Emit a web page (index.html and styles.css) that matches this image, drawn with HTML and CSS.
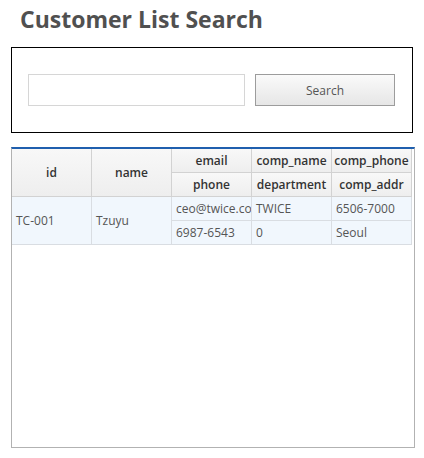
FILE: index.html
```html
<!DOCTYPE html>
<html lang="en">
<head>
<meta charset="utf-8">
<title>Customer List Search</title>
<link rel="stylesheet" href="styles.css">
</head>
<body>
<h1 class="title">Customer List Search</h1>
<div class="search-box">
  <input class="search-input" type="text">
  <button class="search-btn" type="button">Search</button>
</div>
<div class="grid-wrap">
  <div class="grid">
    <div class="hd span2">id</div>
    <div class="hd span2">name</div>
    <div class="hd">email</div>
    <div class="hd">comp_name</div>
    <div class="hd">comp_phone</div>
    <div class="hd">phone</div>
    <div class="hd">department</div>
    <div class="hd">comp_addr</div>
    <div class="td span2">TC-001</div>
    <div class="td span2">Tzuyu</div>
    <div class="td"><span class="clip">ceo@twice.com</span></div>
    <div class="td">TWICE</div>
    <div class="td">6506-7000</div>
    <div class="td">6987-6543</div>
    <div class="td">0</div>
    <div class="td">Seoul</div>
  </div>
</div>
</body>
</html>
```
FILE: styles.css
```css
html, body {
  margin: 0;
  padding: 0;
  background: #fff;
  font-family: "Open Sans", "Noto Sans", sans-serif;
}

.title {
  margin: 0;
  padding: 4px 0 0 20px;
  height: 47px;
  box-sizing: border-box;
  font-size: 23px;
  line-height: 30px;
  font-weight: 700;
  color: #505050;
}

.search-box {
  margin-left: 11px;
  width: 402px;
  height: 86px;
  box-sizing: border-box;
  border: 1px solid #000;
  display: flex;
  align-items: center;
  padding: 0 0 0 16px;
  gap: 10px;
}

.search-input {
  width: 217px;
  height: 32px;
  box-sizing: border-box;
  border: 1px solid #d6d6d6;
  margin: 0;
  padding: 0 6px;
  background: #fff;
  outline: none;
}

.search-btn {
  width: 140px;
  height: 32px;
  box-sizing: border-box;
  border: 1px solid #9c9c9c;
  margin: 0;
  background: linear-gradient(#fafafa, #e6e6e6);
  font-family: "Open Sans", "Noto Sans", sans-serif;
  font-size: 12px;
  color: #555;
  padding: 0;
}

.grid-wrap {
  margin: 14px 0 0 11px;
  width: 404px;
  height: 301px;
  box-sizing: border-box;
  border: 1px solid #b2b2b2;
  border-top: 2px solid #1f5fae;
}

.grid {
  display: grid;
  grid-template-columns: repeat(5, 80px);
  grid-auto-rows: 24px;
}

.hd, .td {
  box-sizing: border-box;
  border-right: 1px solid #d2d2d2;
  border-bottom: 1px solid #d2d2d2;
  font-size: 12px;
  overflow: hidden;
  white-space: nowrap;
  display: flex;
  align-items: center;
}

.hd {
  background: linear-gradient(#f8f8f8, #eeeeee);
  color: #333;
  font-weight: 600;
  justify-content: center;
}

.td {
  background: #f1f7fd;
  color: #555;
  padding-left: 4px;
  border-color: #d9dde2;
}

.clip {
  display: block;
  overflow: hidden;
  width: 75px;
}

.span2 {
  grid-row: span 2;
}
```
